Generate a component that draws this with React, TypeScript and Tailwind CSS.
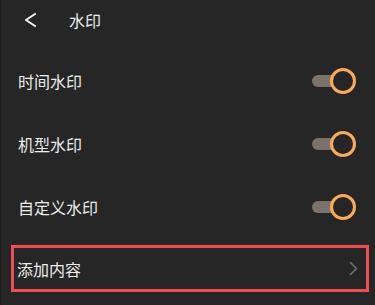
import React, { useState } from "react";

function Toggle({ on, onClick }: { on: boolean; onClick: () => void }) {
  return (
    <button onClick={onClick} className="relative w-[44px] h-[26px] shrink-0">
      <span className="absolute left-0 top-[7px] w-[38px] h-[12px] rounded-full bg-[#7b736b]" />
      <span className="absolute right-0 top-0 w-[26px] h-[26px] rounded-full border-[3px] border-[#f7ab5b] bg-[#262626]" />
    </button>
  );
}

export default function App() {
  const [items, setItems] = useState([
    { label: "时间水印", on: true },
    { label: "机型水印", on: true },
    { label: "自定义水印", on: true },
  ]);

  return (
    <div
      className="w-[375px] h-[305px] bg-[#262626] border-l border-[#1b1b1b] text-[#ececec] overflow-hidden"
      style={{ fontFamily: '"Noto Sans CJK SC", "Noto Sans", sans-serif' }}
    >
      {/* header */}
      <div className="h-[40px] flex items-center">
        <svg width="13" height="14" viewBox="0 0 13 14" className="ml-[23px]" fill="none">
          <path d="M11 1L2 7l9 6" stroke="#f2f2f2" strokeWidth="2" strokeLinecap="round" strokeLinejoin="round" />
        </svg>
        <span className="ml-[32px] text-[16px] leading-none">水印</span>
      </div>

      <div className="pt-[9px]">
        {items.map((item, idx) => (
          <div key={idx} className="h-[63px] flex items-center justify-between pl-[17px] pr-[19px]">
            <span className="text-[16px]">{item.label}</span>
            <Toggle
              on={item.on}
              onClick={() =>
                setItems(items.map((it, i) => (i === idx ? { ...it, on: !it.on } : it)))
              }
            />
          </div>
        ))}
      </div>

      <div className="mt-[7px] ml-[10px] w-[358px] h-[47px] border-[3px] border-[#f24c53] flex items-center justify-between pl-[3px] pr-[8px]">
        <span className="text-[16px]">添加内容</span>
        <svg width="9" height="15" viewBox="0 0 9 15" fill="none">
          <path d="M1.5 1.5l6 6-6 6" stroke="#707070" strokeWidth="1.5" strokeLinecap="round" strokeLinejoin="round" />
        </svg>
      </div>
    </div>
  );
}
